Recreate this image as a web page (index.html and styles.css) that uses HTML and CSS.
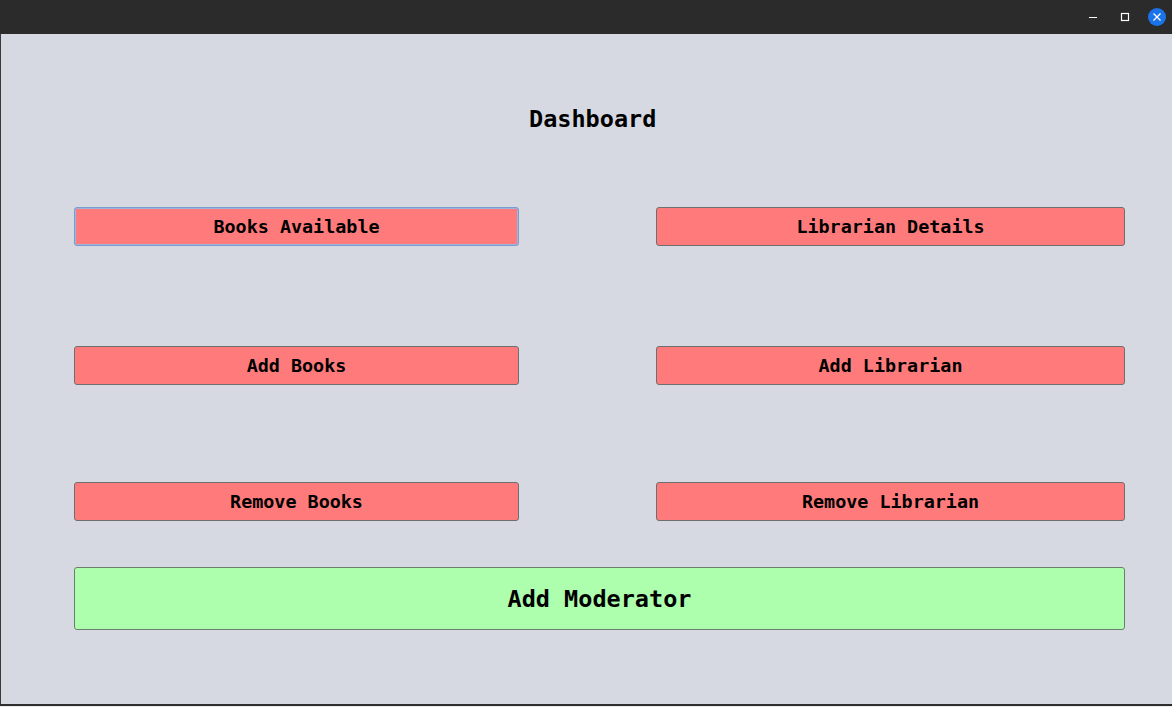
FILE: index.html
```html
<!DOCTYPE html>
<html>
<head>
<meta charset="utf-8">
<link rel="stylesheet" href="styles.css">
</head>
<body>
<div class="window">
  <div class="titlebar">
    <div class="ctrl min"><svg width="12" height="12" viewBox="0 0 12 12"><path d="M1 6.5h8" stroke="#fff" stroke-width="1"/></svg></div>
    <div class="ctrl max"><svg width="12" height="12" viewBox="0 0 12 12"><rect x="2.5" y="2.5" width="7" height="7" fill="none" stroke="#fff" stroke-width="1.2"/></svg></div>
    <div class="ctrl close"><svg width="18" height="18" viewBox="0 0 18 18"><circle cx="9" cy="9" r="9" fill="#1a73e8"/><path d="M5.5 5.5l7 7M12.5 5.5l-7 7" stroke="#fff" stroke-width="1.3"/></svg></div>
  </div>
  <div class="content">
    <h1 class="title">Dashboard</h1>
    <div class="grid">
      <button class="btn red focused">Books Available</button>
      <button class="btn red">Librarian Details</button>
      <button class="btn red row2">Add Books</button>
      <button class="btn red row2">Add Librarian</button>
      <button class="btn red row3">Remove Books</button>
      <button class="btn red row3">Remove Librarian</button>
    </div>
    <button class="btn green">Add Moderator</button>
  </div>
</div>
</body>
</html>
```
FILE: styles.css
```css
html, body {
  margin: 0;
  padding: 0;
  background: #ececec;
}
.window {
  width: 1172px;
  height: 707px;
  display: flex;
  flex-direction: column;
  font-family: "DejaVu Sans Mono", monospace;
}
.titlebar {
  height: 34px;
  background: #2b2b2b;
  display: flex;
  justify-content: flex-end;
  align-items: center;
  flex-shrink: 0;
}
.ctrl {
  display: flex;
  align-items: center;
  justify-content: center;
}
.ctrl.min { width: 12px; margin-right: 19px; }
.ctrl.max { width: 12px; margin-right: 17px; }
.ctrl.close { width: 18px; margin-right: 6px; }
.content {
  height: 670px;
  flex-shrink: 0;
  background: #d6d9e1;
  border-left: 1px solid #3a3a3a;
  border-bottom: 2px solid #2e2e2e;
  box-sizing: content-box;
  padding-left: 73px;
  display: flex;
  flex-direction: column;
  align-items: flex-start;
}
.title {
  margin: 71px 0 0 455px;
  font-size: 23.5px;
  line-height: 28px;
  font-weight: bold;
  color: #000;
}
.grid {
  display: grid;
  grid-template-columns: 445px 469px;
  column-gap: 137px;
  margin-top: 74px;
}
.btn {
  font-family: "DejaVu Sans Mono", monospace;
  font-weight: bold;
  color: #000;
  border: 1px solid #6e6e6e;
  border-radius: 3px;
  padding: 0;
  margin: 0;
}
.red {
  height: 39px;
  font-size: 18.4px;
  background: #ff7b7b;
}
.red.focused {
  border-color: #7b9bd0;
  box-shadow: inset 0 0 0 1px #9eb6dd;
}
.row2 { margin-top: 100px; }
.row3 { margin-top: 97px; }
.green {
  width: 1051px;
  height: 63px;
  margin-top: 46px;
  font-size: 23.5px;
  background: #adffad;
  border-color: #6a7f6a;
}
```
